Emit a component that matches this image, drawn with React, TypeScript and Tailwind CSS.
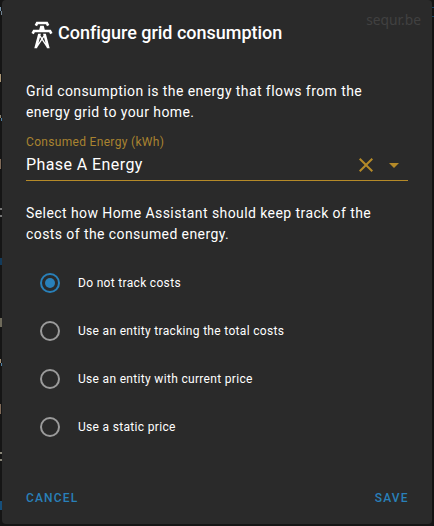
const options = [
  'Do not track costs',
  'Use an entity tracking the total costs',
  'Use an entity with current price',
  'Use a static price',
];

// Slivers of the page behind the dialog, top to bottom.
const edgeMarks = [
  'mt-[7px] h-[4px] w-px bg-[#7894ad]',
  'ml-px h-[4px] w-px bg-[#6f8190]',
  'mt-[59px] h-[8px] w-px bg-[#ab9675]',
  'mt-[33px] h-[3px] w-px bg-[#8a8270]',
  'ml-px h-[3px] w-px bg-[#4d7fa3]',
  'mt-[38px] h-[10px] w-px bg-[#806a58]',
  'mt-[39px] h-[2px] w-[2px] bg-[#777777]',
  'mt-[5px] h-[2px] w-[2px] bg-[#777777]',
  'mt-[41px] h-[7px] w-[2px] bg-[#123b5c]',
  'mt-[53px] h-[9px] w-[2px] bg-[#6f6b5b]',
  'mt-[32px] h-[4px] w-px bg-[#a18e75]',
  'ml-px h-[3px] w-px bg-[#4d7fa3]',
  'mt-[38px] h-[10px] w-px bg-[#806a58]',
  'mt-[38px] h-[2px] w-[2px] bg-[#888578]',
  'mt-[5px] h-[2px] w-[2px] bg-[#888578]',
  'mt-[40px] h-[9px] w-[2px] bg-[#164f7b]',
];

function TowerIcon() {
  return (
    <svg viewBox="0 0 24 24" className="size-8 shrink-0 fill-white">
      <path d="M8.28,5.45L6.5,4.55L7.76,2H16.23L17.5,4.55L15.72,5.44L15,4H9L8.28,5.45M18.62,8H14.09L13.3,5H10.7L9.91,8H5.38L4.1,10.55L5.89,11.44L6.62,10H17.38L18.1,11.45L19.89,10.56L18.62,8M17.77,22H15.7L15.46,21.1L12,15.9L8.53,21.1L8.3,22H6.23L9.12,11H11.19L10.83,12.35L12,14.1L13.16,12.35L12.81,11H14.88L17.77,22M11.4,15L10.5,13.65L9.32,18.13L11.4,15M14.68,18.12L13.5,13.64L12.6,15L14.68,18.12Z" />
    </svg>
  );
}

function Radio({ label, checked }: { label: string; checked: boolean }) {
  return (
    <label className="flex h-12 items-center">
      <span
        className={`ml-[14px] flex size-5 items-center justify-center rounded-full border-2 ${checked ? 'border-[#2980b9]' : 'border-[#9b9b9b]'}`}
      >
        {checked && <span className="size-[10px] rounded-full bg-[#2980b9]" />}
      </span>
      <span className="ml-[18px] text-[12px] tracking-[0.32px]">{label}</span>
    </label>
  );
}

export default function App() {
  return (
    <div className="flex h-[526px] w-[434px] overflow-hidden bg-[#151515] font-['Roboto',sans-serif] text-white">
      <div className="flex w-[2px] shrink-0 flex-col">
        {edgeMarks.map((mark, i) => (
          <span key={i} className={`shrink-0 ${mark}`} />
        ))}
      </div>

      <main className="relative flex h-[524px] w-[430px] shrink-0 flex-col rounded bg-[#2a2a2a] px-6 pt-[19px]">
        <span className="absolute top-[10px] right-[11px] font-['Noto_Sans',sans-serif] text-[13.8px] leading-5 text-[#414141]">
          sequr.be
        </span>
        <header className="flex h-8 items-start">
          <TowerIcon />
          <h1 className="text-[18px] leading-7 font-medium tracking-[-0.02px] whitespace-nowrap">
            Configure grid consumption
          </h1>
        </header>

        <p className="mt-[30px] text-[14px] leading-[21px] tracking-[0.42px]">
          Grid consumption is the energy that flows from the
          <br />
          energy grid to your home.
        </p>

        <section className="mt-[11px] flex h-[47px] flex-col">
          <span className="text-[12px] leading-4 tracking-[0.32px] text-[#a98330]">
            Consumed Energy (kWh)
          </span>
          <div className="flex h-[30px] items-center">
            <span className="flex-1 text-[16px] leading-6 tracking-[0.42px]">Phase A Energy</span>
            <svg viewBox="0 0 24 24" className="size-6 fill-[#b58a28]">
              <path d="M19,6.41L17.59,5L12,10.59L6.41,5L5,6.41L10.59,12L5,17.59L6.41,19L12,13.41L17.59,19L19,17.59L13.41,12L19,6.41Z" />
            </svg>
            <svg viewBox="0 0 24 24" className="mr-[2px] ml-1 size-6 fill-[#b58a28]">
              <path d="M7,10L12,15L17,10H7Z" />
            </svg>
          </div>
          <div className="h-px w-full bg-[#b58a28]" />
        </section>

        <p className="mt-[22px] text-[14px] leading-[21px] tracking-[0.42px]">
          Select how Home Assistant should keep track of the
          <br />
          costs of the consumed energy.
        </p>

        <div className="mt-[14px] flex flex-col">
          {options.map((label, i) => (
            <Radio key={label} label={label} checked={i === 0} />
          ))}
        </div>

        <footer className="mt-[37px] flex justify-between text-[12px] leading-5 font-medium text-[#2980b9]">
          <button className="tracking-[1.15px]">CANCEL</button>
          <button className="-mr-[0.6px] tracking-[1.15px]">SAVE</button>
        </footer>
      </main>

      <div className="flex w-[2px] shrink-0 flex-col bg-[#131313] pt-[7px]">
        <span className="h-px bg-[#174464]" />
        <span className="mt-2 h-px bg-[#174464]" />
      </div>
    </div>
  );
}
